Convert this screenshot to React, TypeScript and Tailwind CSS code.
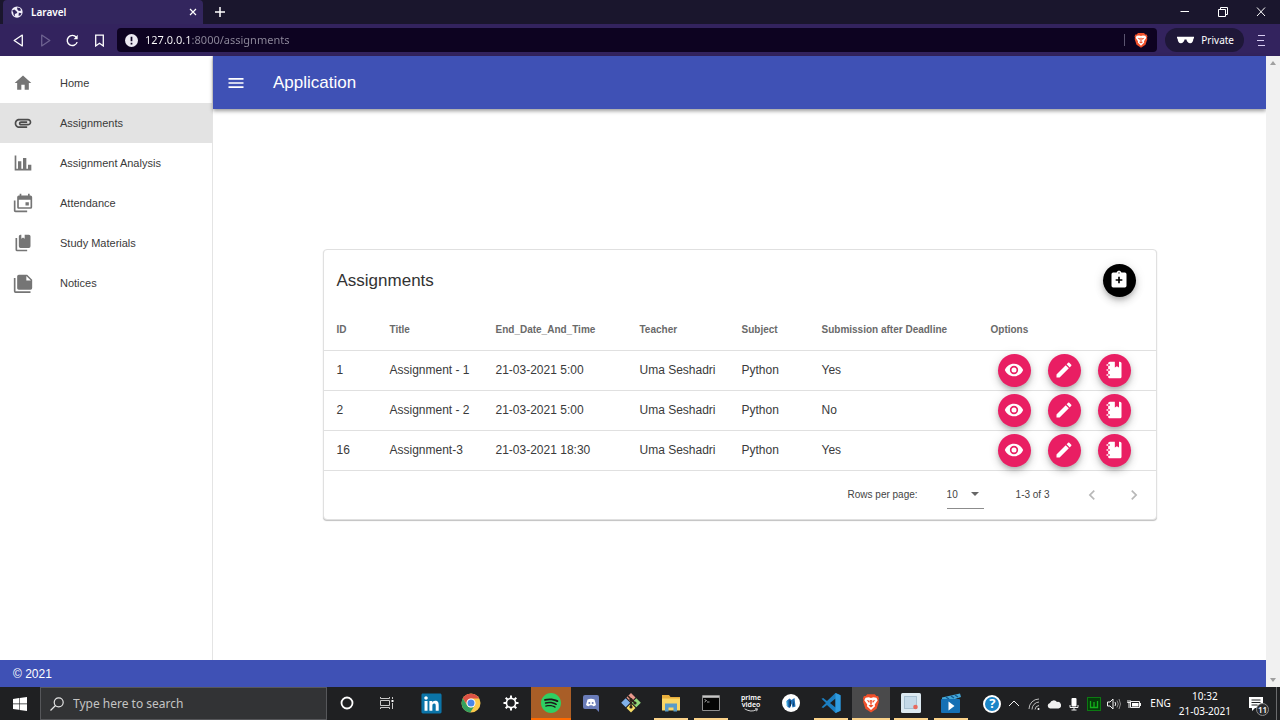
import type { ReactNode } from "react";
import { FaLinkedin } from "react-icons/fa";
import { SiSpotify } from "react-icons/si";

const iconPaths = {
  home: "M10 20v-6h4v6h5v-8h3L12 3 2 12h3v8z",
  attachment:
    "M2 12.5C2 9.46 4.46 7 7.5 7H18c2.21 0 4 1.79 4 4s-1.79 4-4 4H9.5C8.12 15 7 13.88 7 12.5S8.12 10 9.5 10H17v2H9.41c-.55 0-.55 1 0 1H18c1.1 0 2-.9 2-2s-.9-2-2-2H7.5C5.57 9 4 10.57 4 12.5S5.57 16 7.5 16H17v2H7.5C4.46 18 2 15.54 2 12.5z",
  chart: "M22,21H2V3H4V19H6V10H10V19H12V6H16V19H18V14H22V21Z",
  calendar:
    "M21,17V8H7V17H21M21,3A2,2 0 0,1 23,5V17A2,2 0 0,1 21,19H7C5.89,19 5,18.1 5,17V5A2,2 0 0,1 7,3H8V1H10V3H18V1H20V3H21M3,21H17V23H3C1.89,23 1,22.1 1,21V9H3V21M19,15H15V11H19V15Z",
  books:
    "M19,18H9A2,2 0 0,1 7,16V4A2,2 0 0,1 9,2H10V7L12,5.5L14,7V2H19A2,2 0 0,1 21,4V16A2,2 0 0,1 19,18M17,20V22H5A2,2 0 0,1 3,20V6H5V20H17Z",
  notes:
    "M16,9H21.5L16,3.5V9M7,2H17L23,8V18A2,2 0 0,1 21,20H7C5.89,20 5,19.1 5,18V4A2,2 0 0,1 7,2M3,6V22H21V24H3A2,2 0 0,1 1,22V6H3Z",
  menu: "M3,6H21V8H3V6M3,11H21V13H3V11M3,16H21V18H3V16Z",
  clipboardPlus:
    "M19,3H14.82C14.4,1.84 13.3,1 12,1C10.7,1 9.6,1.84 9.18,3H5A2,2 0 0,0 3,5V19A2,2 0 0,0 5,21H19A2,2 0 0,0 21,19V5A2,2 0 0,0 19,3M12,2.75A.75,.75 0 0,1 12.75,3.5A.75,.75 0 0,1 12,4.25A.75,.75 0 0,1 11.25,3.5A.75,.75 0 0,1 12,2.75M16,13H13V16H11V13H8V11H11V8H13V11H16V13Z",
  eye: "M12,9A3,3 0 0,0 9,12A3,3 0 0,0 12,15A3,3 0 0,0 15,12A3,3 0 0,0 12,9M12,17A5,5 0 0,1 7,12A5,5 0 0,1 12,7A5,5 0 0,1 17,12A5,5 0 0,1 12,17M12,4.5C7,4.5 2.73,7.61 1,12C2.73,16.39 7,19.5 12,19.5C17,19.5 21.27,16.39 23,12C21.27,7.61 17,4.5 12,4.5Z",
  pencil:
    "M20.71,7.04C21.1,6.65 21.1,6 20.71,5.63L18.37,3.29C18,2.9 17.35,2.9 16.96,3.29L15.12,5.12L18.87,8.87M3,17.25V21H6.75L17.81,9.93L14.06,6.18L3,17.25Z",
  notebook:
    "M3,7V5H5V4C5,2.89 5.9,2 7,2H13V9L15.5,7.5L18,9V2H19C20.05,2 21,2.95 21,4V20C21,21.05 20.05,22 19,22H7C5.95,22 5,21.05 5,20V19H3V17H5V13H3V11H5V7H3M7,11H5V13H7V11M7,7V5H5V7H7M7,19V17H5V19H7Z",
  left: "M15.41,16.58L10.83,12L15.41,7.41L14,6L8,12L14,18L15.41,16.58Z",
  right: "M8.59,16.58L13.17,12L8.59,7.41L10,6L16,12L10,18L8.59,16.58Z",
};

type IconName = keyof typeof iconPaths;

function Icon({ name, className = "size-5" }: { name: IconName; className?: string }) {
  return (
    <svg viewBox="0 0 24 24" fill="currentColor" aria-hidden="true" className={className}>
      <path d={iconPaths[name]} />
    </svg>
  );
}

function BraveLion({ className }: { className: string }) {
  return (
    <svg viewBox="0 0 24 24" aria-hidden="true" className={className}>
      <path d="M7.500 1.500h9l2 2.200 2 0 1.200 3-.7 1.800.5 2-2.800 8.500-6.700 4.500L5.300 19 2.500 10.500l.5-2L2.300 6.700l1.200-3 2 0z" fill="#f1502b" />
      <path d="M5.500 5.800l3.700-.6 2.800.8 2.800-.8 3.700.6 1.500 3-3.500 5 .3 2L12 20.500 7.200 15.800l.3-2L4 8.800z" fill="#fff" />
      <path d="M6.800 8.500l3.700.8-.7 2.700zM17.200 8.500l-3.700.8.7 2.700zM10.900 8.500h2.200l-.3 5h-1.600zM9 15l3-1.300 3 1.300-3 2.300z" fill="#f1502b" />
    </svg>
  );
}

function TitleBar() {
  return (
    <div className="flex h-6 items-stretch bg-[#1a162d] pl-[3px]">
      <div className="flex w-[200px] items-center rounded-t bg-[#33265e] pl-2 pr-1 text-white">
        <svg viewBox="0 0 16 16" className="size-3" aria-hidden="true">
          <circle cx="8" cy="8" r="7.500" fill="#f2effa" />
          <path d="M1.500 6l3-1.500L7 6.500l1.500 2-1.500 1.500-2 .5.500 3L3.500 12 3 9zM8 2l4 .5 1.500 3.500-3 .5L8.500 4.500zM10.500 9l3.500.5-1.500 3-2.500.5z" fill="#33265e" />
        </svg>
        <span className="ml-2 flex-1 text-[10px] font-semibold">Laravel</span>
        <button aria-label="Close tab" className="flex size-3 items-center justify-center">
          <svg viewBox="0 0 8 8" className="size-2" stroke="currentColor" strokeWidth="1.200" aria-hidden="true">
            <path d="M1 1l6 6M7 1L1 7" />
          </svg>
        </button>
      </div>
      <button aria-label="New tab" className="ml-3 text-white">
        <svg viewBox="0 0 10 10" className="size-[10px]" stroke="currentColor" strokeWidth="1.500" aria-hidden="true">
          <path d="M5 0v10M0 5h10" />
        </svg>
      </button>
      <div className="ml-auto flex items-center gap-7 pr-[14px] text-white">
        <button aria-label="Minimize">
          <svg viewBox="0 0 10 10" className="size-[10px]" stroke="currentColor" aria-hidden="true">
            <path d="M.5 4.500h8.500" />
          </svg>
        </button>
        <button aria-label="Restore">
          <svg viewBox="0 0 10 10" className="size-[10px]" stroke="currentColor" fill="none" aria-hidden="true">
            <path d="M.5 2.500h7v7h-7zM2.500 2.500v-2h7v7h-2" />
          </svg>
        </button>
        <button aria-label="Close">
          <svg viewBox="0 0 10 10" className="size-[10px]" stroke="currentColor" aria-hidden="true">
            <path d="M1 .5l8 8.500M9 .5L1 9" />
          </svg>
        </button>
      </div>
    </div>
  );
}

function AddressBar() {
  return (
    <div className="flex h-8 items-center bg-[#33235e] text-white">
      <div className="flex w-[117px] items-center gap-[14px] pl-3">
        <button aria-label="Back">
          <svg viewBox="0 0 12 12" className="size-[13px]" fill="none" stroke="currentColor" strokeWidth="1.200" strokeLinejoin="round" aria-hidden="true">
            <path d="M9.500 1v10L2 6z" />
          </svg>
        </button>
        <button aria-label="Forward" disabled className="text-[#6d6290]">
          <svg viewBox="0 0 12 12" className="size-[13px]" fill="none" stroke="currentColor" strokeWidth="1.200" strokeLinejoin="round" aria-hidden="true">
            <path d="M2.500 1v10L10 6z" />
          </svg>
        </button>
        <button aria-label="Reload">
          <svg viewBox="0 0 12 12" className="size-[13px]" fill="none" stroke="currentColor" strokeWidth="1.300" aria-hidden="true">
            <path d="M10.300 7.500A4.700 4.700 0 1 1 9.500 3" />
            <path d="M10.800.8v4H7z" fill="currentColor" stroke="none" />
          </svg>
        </button>
        <button aria-label="Bookmark">
          <svg viewBox="0 0 12 12" className="size-[13px]" fill="none" stroke="currentColor" strokeWidth="1.200" aria-hidden="true">
            <path d="M2.500 1h7v10L6 8.500 2.500 11z" />
          </svg>
        </button>
      </div>
      <div className="flex h-6 flex-1 items-center rounded bg-[#0d0321] px-2">
        <svg viewBox="0 0 12 12" className="size-[13px] shrink-0" aria-hidden="true">
          <circle cx="6" cy="6" r="6" fill="#eceaf2" />
          <path d="M5.200 2.500h1.600v4.300H5.200zM5.200 8h1.600v1.600H5.200z" fill="#0d0321" />
        </svg>
        <input
          aria-label="Address"
          defaultValue="127.0.0.1:8000/assignments"
          className="ml-[7px] h-6 min-w-0 flex-1 bg-[linear-gradient(90deg,#fff_46px,#8f8a9c_46px)] bg-clip-text pb-[2px] text-[11px] text-transparent outline-none"
        />
        <span className="h-3 w-px bg-[#5b5470]" />
        <button aria-label="Shields" className="ml-2">
          <BraveLion className="size-4" />
        </button>
      </div>
      <button className="ml-2 flex h-6 items-center gap-[7px] rounded-full bg-[#1e1738] pl-3 pr-[10px] text-[10px]">
        <svg viewBox="0 0 18 8" className="h-2 w-[17px]" fill="#fff" aria-hidden="true">
          <path d="M0 .5h18v2h-.6C17.200 5.800 16 7.500 14 7.500c-2.200 0-3.600-2-4-4h-2C7.600 5.500 6.200 7.500 4 7.500 2 7.500.8 5.800.6 2.500H0z" />
        </svg>
        Private
      </button>
      <button aria-label="Browser menu" className="ml-[13px] mr-[15px] text-[#d8cdf2]">
        <svg viewBox="0 0 8 11" className="h-[11px] w-2" stroke="currentColor" aria-hidden="true">
          <path d="M1 .5h7M0 5.500h7M1 10.500h7" />
        </svg>
      </button>
    </div>
  );
}

const navItems: { label: string; icon: IconName; active?: boolean }[] = [
  { label: "Home", icon: "home" },
  { label: "Assignments", icon: "attachment", active: true },
  { label: "Assignment Analysis", icon: "chart" },
  { label: "Attendance", icon: "calendar" },
  { label: "Study Materials", icon: "books" },
  { label: "Notices", icon: "notes" },
];

function Sidebar() {
  return (
    <nav className="w-[213px] shrink-0 border-r border-[#e4e4e4] bg-white pt-[7px] text-[11px] text-[#3a3a3a]">
      {navItems.map((item) => (
        <a
          key={item.label}
          href="#"
          className={`flex h-10 items-center gap-[27px] pl-[13px] ${item.active ? "bg-[#e3e3e3]" : ""}`}
        >
          <span className={item.active ? "text-[#4c4c4c]" : "text-[#757575]"}>
            <Icon name={item.icon} />
          </span>
          {item.label}
        </a>
      ))}
    </nav>
  );
}

function Fab({ label, icon, dark }: { label: string; icon: IconName; dark?: boolean }) {
  return (
    <button
      aria-label={label}
      className={`flex size-[33px] shrink-0 items-center justify-center rounded-full text-white shadow-[0_3px_5px_-1px_rgba(0,0,0,.2),0_5px_8px_rgba(0,0,0,.12),0_1px_12px_rgba(0,0,0,.1)] ${dark ? "bg-black" : "bg-[#e91e63]"}`}
    >
      <Icon name={icon} />
    </button>
  );
}

const columns = [
  { label: "ID", width: "w-[53px]" },
  { label: "Title", width: "w-[106px]" },
  { label: "End_Date_And_Time", width: "w-36" },
  { label: "Teacher", width: "w-[102px]" },
  { label: "Subject", width: "w-20" },
  { label: "Submission after Deadline", width: "w-[169px]" },
  { label: "Options", width: "" },
];

const rows = [
  ["1", "Assignment - 1", "21-03-2021 5:00", "Uma Seshadri", "Python", "Yes"],
  ["2", "Assignment - 2", "21-03-2021 5:00", "Uma Seshadri", "Python", "No"],
  ["16", "Assignment-3", "21-03-2021 18:30", "Uma Seshadri", "Python", "Yes"],
];

function AssignmentsCard() {
  return (
    <section className="w-full max-w-[834px] rounded border border-[#e0e0e0] bg-white shadow-[0_1px_1px_rgba(0,0,0,.25)]">
      <header className="flex h-[60px] items-center justify-between pl-[13px] pr-5">
        <h1 className="text-[17px] text-[#333]">Assignments</h1>
        <Fab label="Add assignment" icon="clipboardPlus" dark />
      </header>
      <table className="w-full table-fixed border-collapse text-left text-[#3a3a3a]">
        <thead>
          <tr className="h-10 border-b border-[#e0e0e0] text-[10px] text-[#6a6a6a]">
            {columns.map((column) => (
              <th key={column.label} className={`whitespace-nowrap px-[13px] pb-[2px] pt-0 font-bold ${column.width}`}>
                {column.label}
              </th>
            ))}
          </tr>
        </thead>
        <tbody className="text-xs">
          {rows.map((row) => (
            <tr key={row[0]} className="h-10 border-b border-[#e0e0e0]">
              {row.map((cell, index) => (
                <td key={columns[index].label} className="whitespace-nowrap px-[13px] py-0">
                  {cell}
                </td>
              ))}
              <td className="px-[13px] py-0">
                <div className="flex gap-[17px] pl-[7px]">
                  <Fab label="View" icon="eye" />
                  <Fab label="Edit" icon="pencil" />
                  <Fab label="Submissions" icon="notebook" />
                </div>
              </td>
            </tr>
          ))}
        </tbody>
      </table>
      <footer className="flex h-12 items-center justify-end pr-3 text-[10px] text-[#444]">
        <label htmlFor="rows-per-page">Rows per page:</label>
        <div className="relative ml-[29px] border-b border-[#8c8c8c]">
          <select id="rows-per-page" defaultValue="10" className="h-7 w-[37px] appearance-none bg-transparent outline-none">
            <option>5</option>
            <option>10</option>
            <option>15</option>
          </select>
          <svg viewBox="0 0 8 4" className="pointer-events-none absolute right-[5px] top-3 h-1 w-2" fill="#666" aria-hidden="true">
            <path d="M0 0h8L4 4z" />
          </svg>
        </div>
        <span className="ml-8">1-3 of 3</span>
        <div className="ml-8 flex gap-[22px] text-[#b8b8b8]">
          <button aria-label="Previous page" disabled>
            <Icon name="left" />
          </button>
          <button aria-label="Next page" disabled>
            <Icon name="right" />
          </button>
        </div>
      </footer>
    </section>
  );
}

function Scrollbar() {
  return (
    <div className="flex w-[14px] shrink-0 flex-col items-center justify-between bg-[#f1f1f1] py-[5px]" aria-hidden="true">
      <svg viewBox="0 0 6 4" className="h-1 w-[6px]" fill="#a0a0a0">
        <path d="M0 4h6L3 0z" />
      </svg>
      <svg viewBox="0 0 6 4" className="h-1 w-[6px]" fill="#a0a0a0">
        <path d="M0 0h6L3 4z" />
      </svg>
    </div>
  );
}

type TaskbarApp = { label: string; art: ReactNode; tone?: string };

const systemButtons: TaskbarApp[] = [
  {
    label: "Cortana",
    art: (
      <svg viewBox="0 0 14 14" className="size-[14px]" fill="none" stroke="#fff" strokeWidth="1.800">
        <circle cx="7" cy="7" r="5.500" />
      </svg>
    ),
  },
  {
    label: "Task View",
    art: (
      <svg viewBox="0 0 14 14" className="size-[14px]" fill="none" stroke="#c8c8c8">
        <path d="M.5 4.500h9v5h-9zM.5 1v1.500h9V1M.5 13v-1.500h9V13M12.500 1v2M12.500 7v6" />
        <path d="M11.500 4h2v2h-2z" fill="#fff" stroke="none" />
      </svg>
    ),
  },
];

const taskbarApps: TaskbarApp[] = [
  {
    label: "LinkedIn",
    art: (
      <span className="flex size-4 items-center justify-center bg-white">
        <FaLinkedin className="size-[23px] shrink-0 text-[#0b74a8]" />
      </span>
    ),
  },
  {
    label: "Chrome",
    art: (
      <svg viewBox="0 0 20 20" className="size-5">
        <circle cx="10" cy="10" r="9.500" fill="#fbc94a" />
        <path d="M1.800 5.200A9.500 9.500 0 0 1 18.200 5.500H10a4.500 4.500 0 0 0-4.200 6z" fill="#dc5246" />
        <path d="M1.800 5.200A9.500 9.500 0 0 0 9.300 19.500l4.300-7A4.500 4.500 0 0 1 6 12.200z" fill="#34a05f" />
        <circle cx="10" cy="10" r="4.500" fill="#fff" />
        <circle cx="10" cy="10" r="3.500" fill="#4a86e8" />
      </svg>
    ),
  },
  {
    label: "Settings",
    art: (
      <svg viewBox="0 0 16 16" className="size-4" fill="none" stroke="#fff">
        <circle cx="8" cy="8" r="4.600" strokeWidth="1.700" />
        <path
          d="M8 .5v2.500M8 13v2.500M.5 8H3M13 8h2.500M2.700 2.700l1.800 1.800M11.500 11.500l1.800 1.800M13.300 2.700l-1.800 1.800M4.500 11.500l-1.800 1.800"
          strokeWidth="2"
        />
      </svg>
    ),
  },
  {
    label: "Spotify",
    tone: "bg-[#a95e27] border-[#ff6a00]",
    art: (
      <span className="flex size-[18px] items-center justify-center rounded-full bg-[#1a1a1a]">
        <SiSpotify className="size-5 shrink-0 text-[#2fcf62]" />
      </span>
    ),
  },
  {
    label: "Discord",
    art: (
      <svg viewBox="0 0 18 18" className="size-[18px]">
        <path d="M3 1h12a2 2 0 0 1 2 2v15l-3-3H3a2 2 0 0 1-2-2V3a2 2 0 0 1 2-2z" fill="#6a7cb8" />
        <path d="M5.500 5.500Q9 4 12.500 5.500L14 11q-1.500 1.300-3 1.300l-.6-1H7.600l-.6 1Q5.500 12.300 4 11z" fill="#fff" />
        <circle cx="7.300" cy="9" r="1" fill="#6a7cb8" />
        <circle cx="10.700" cy="9" r="1" fill="#6a7cb8" />
      </svg>
    ),
  },
  {
    label: "Git Bash",
    art: (
      <svg viewBox="0 0 20 20" className="size-5">
        <path d="M10 0l4.500 4.500L10 9 5.500 4.500z" fill="#e8988c" />
        <path d="M4.700 5.300l4.500 4.500-4.500 4.500L.2 9.800z" fill="#80b0e8" />
        <path d="M15.300 5.300l4.500 4.500-4.500 4.500-4.500-4.500z" fill="#93d97a" />
        <path d="M10 10.600l4.500 4.500L10 19.600l-4.500-4.500z" fill="#f8dc66" />
        <path d="M7 3l3 3v8M10 6l4 4" stroke="#2b2118" strokeWidth="1.500" fill="none" />
        <circle cx="10" cy="6.500" r="1.600" fill="#2b2118" />
        <circle cx="10" cy="14" r="1.600" fill="#2b2118" />
        <circle cx="14" cy="10" r="1.600" fill="#2b2118" />
      </svg>
    ),
  },
  {
    label: "File Explorer",
    tone: "mx-[3px] border-[#fbd38a]",
    art: (
      <svg viewBox="0 0 20 18" className="h-[18px] w-5">
        <path d="M1 1h7l1.500 2H19v4H1z" fill="#e8ae3c" />
        <path d="M1 4.500h18v12H1z" fill="#fbd765" />
        <path d="M4 9.500h12v8h-3.500v-4h-5v4H4z" fill="#5a9cc8" />
      </svg>
    ),
  },
  {
    label: "Command Prompt",
    tone: "mx-[3px] border-[#fbd38a]",
    art: (
      <svg viewBox="0 0 18 16" className="h-4 w-[18px]">
        <path d="M.5.5h17v15H.5z" fill="#050505" stroke="#8f8f8f" />
        <path d="M1 1h16v1.800H1z" fill="#c6c6c6" />
        <path d="M2.500 4.500l2 1L2.500 7M5 7h2.500" stroke="#ccc" strokeWidth=".8" fill="none" />
      </svg>
    ),
  },
  {
    label: "Prime Video",
    art: (
      <span className="flex flex-col items-center text-[7px] font-semibold leading-[7px] text-white">
        <span>prime</span>
        <span>video</span>
        <svg viewBox="0 0 18 5" className="h-1 w-[18px]" fill="none" stroke="#fff">
          <path d="M1 1q8 5 15 1M14 1l3 0-1 3" />
        </svg>
      </span>
    ),
  },
  {
    label: "Music Player",
    art: (
      <svg viewBox="0 0 18 18" className="size-[18px]">
        <circle cx="9" cy="9" r="9" fill="#fff" />
        <path d="M4.500 7l3-2.500 2 1.500 3-2 1 8.500-3 1-1-4-1.500 4.500-2.500-1z" fill="#1f6fb5" />
        <path d="M7.500 6l1.500 1v5l-1.500 1zM11 6.500l1 5h-1z" fill="#0c2f55" />
        <path d="M5 7v5" stroke="#51c2ec" />
      </svg>
    ),
  },
  {
    label: "Visual Studio Code",
    tone: "mx-[3px] border-[#fbd38a]",
    art: (
      <svg viewBox="0 0 20 20" className="size-5">
        <path d="M14.500 0L19.500 2.200v15.600L14.500 20 6 12 2.200 15 .5 14.200 5 10 .5 5.800 2.200 5 6 8zM14.500 5.500L9 10l5.500 4.500z" fill="#1c7fc2" />
        <path d="M14.500 0l5 2.200v15.600l-5 2.200z" fill="#2f9bdf" />
      </svg>
    ),
  },
  {
    label: "Brave",
    tone: "mx-px bg-[#4a4a4b] border-[#fbd38a]",
    art: <BraveLion className="size-5" />,
  },
  {
    label: "Snipping Tool",
    tone: "mx-[3px] border-[#fbd38a]",
    art: (
      <svg viewBox="0 0 20 20" className="size-5">
        <rect width="20" height="20" rx="1.500" fill="#dce9f1" />
        <path d="M3.500 3.500h12v12h-12z" fill="#c4d9e8" stroke="#7f9fb5" strokeDasharray="1 1" />
        <circle cx="14.500" cy="14" r="2.300" fill="#e8695e" />
      </svg>
    ),
  },
  {
    label: "Movies",
    tone: "mx-[3px] border-[#fbd38a]",
    art: (
      <svg viewBox="0 0 20 20" className="size-5">
        <path d="M1 4.500L19 .5l1 3.500-9 3H1z" fill="#43a7d8" />
        <path d="M5 4l3 2M10 3l3 2M14 2l3 2" stroke="#135a95" strokeWidth="1.500" />
        <rect y="6" width="19" height="14" rx="1" fill="#1570b4" />
        <path d="M7.500 8.500l6 4.500-6 4.500z" fill="#fff" />
      </svg>
    ),
  },
];

function TaskbarGroup({ apps }: { apps: TaskbarApp[] }) {
  return (
    <div className="flex">
      {apps.map((app) => (
        <div key={app.label} className="flex w-10">
          <button
            aria-label={app.label}
            className={`flex flex-1 items-center justify-center border-b-2 pt-px ${app.tone ?? "border-transparent"}`}
          >
            {app.art}
          </button>
        </div>
      ))}
    </div>
  );
}

function TrayIcon({ label, children }: { label: string; children: ReactNode }) {
  return (
    <button aria-label={label} className="flex w-5 items-center justify-center">
      <svg viewBox="0 0 14 14" className="size-[14px]" fill="none" stroke="#f2f2f2">
        {children}
      </svg>
    </button>
  );
}

function Taskbar() {
  return (
    <div className="flex h-[33px] items-stretch bg-[#1f2022] text-white">
      <button aria-label="Start" className="flex w-10 items-center justify-center">
        <svg viewBox="0 0 14 14" className="size-[14px]" fill="#fff" aria-hidden="true">
          <path d="M0 2l6-.9v5.500H0zM6.600 1L14 0v6.600H6.600zM0 7.300h6v5.500L0 12zM6.600 7.300H14V14l-7.400-1z" />
        </svg>
      </button>
      <label className="flex w-[287px] items-center gap-[9px] border border-[#56575a] bg-[#323335] pl-[9px]">
        <svg viewBox="0 0 14 14" className="size-[14px]" fill="none" stroke="#e4e4e4" strokeWidth="1.200" aria-hidden="true">
          <circle cx="8.700" cy="5.300" r="4.500" />
          <path d="M5.500 8.500L.5 13.500" />
        </svg>
        <input
          aria-label="Search"
          placeholder="Type here to search"
          className="min-w-0 flex-1 bg-transparent text-xs text-white outline-none placeholder:text-[#c4c4c4]"
        />
      </label>
      <div className="flex gap-1">
        <TaskbarGroup apps={systemButtons} />
        <TaskbarGroup apps={taskbarApps} />
      </div>
      <div className="ml-auto flex items-stretch">
        <button aria-label="Help" className="mr-[2px] flex w-5 items-center justify-center">
          <span className="flex size-[18px] items-center justify-center rounded-full border-2 border-white bg-[#1b86c8] text-[13px] font-bold leading-none">
            ?
          </span>
        </button>
        <TrayIcon label="Show hidden icons">
          <path d="M2 9l5-5 5 5" />
        </TrayIcon>
        <TrayIcon label="Network">
          <path d="M2 12A10 10 0 0 1 12 2M5 12.500A7.500 7.500 0 0 1 12 5M8 12.500A4.500 4.500 0 0 1 12 8.500" stroke="#bdbdbd" />
          <circle cx="11.500" cy="12" r="1" fill="#fff" stroke="none" />
        </TrayIcon>
        <TrayIcon label="OneDrive">
          <path d="M3 11.500a2.800 2.800 0 0 1 0-5.500 4 4 0 0 1 7-1 3.300 3.300 0 0 1 1.500 6.500z" fill="#f0f0f0" stroke="none" />
        </TrayIcon>
        <TrayIcon label="Microphone">
          <rect x="4.500" y="1" width="5" height="8.500" rx="1" fill="#fff" stroke="none" />
          <path d="M3 8v2.500h8V8M7 10.500V13M4.500 13h5" />
        </TrayIcon>
        <TrayIcon label="Antivirus">
          <rect x=".5" y=".5" width="13" height="13" fill="#063c0a" stroke="#0c7a12" />
          <path d="M3.500 4v6.500h7V4M7 5v5" stroke="#14b01c" strokeWidth="1.300" />
        </TrayIcon>
        <TrayIcon label="Volume">
          <path d="M.5 5h2.500l3-3v10L3 9H.5zM8 5q1.500 2 0 4" />
          <path d="M10 3.500q2.500 3.500 0 7M12 2q3 5 0 10" stroke="#8b8b8b" />
        </TrayIcon>
        <TrayIcon label="Battery">
          <path d="M3.500 4.500h9v6h-9zM13.500 6v3M1 3v3M3 3v3M.5 5.500h3M2 6v5" />
          <path d="M5 6h6.500v3.500H5z" fill="#fff" stroke="none" />
        </TrayIcon>
        <button className="ml-[6px] text-[10px]">ENG</button>
        <button className="ml-2 flex flex-col items-center justify-center text-[10px] leading-[15px]">
          <span>10:32</span>
          <span>21-03-2021</span>
        </button>
        <button aria-label="11 notifications" className="relative ml-[18px] mr-[7px] flex w-5 items-center">
          <svg viewBox="0 0 14 14" className="size-[14px]" aria-hidden="true">
            <path d="M0 0h14v11H6l-3 3v-3H0z" fill="#fff" />
            <path d="M2.500 3h9M2.500 5.500h9M2.500 8h6" stroke="#1f2022" />
          </svg>
          <span className="absolute bottom-1 right-0 flex size-[13px] items-center justify-center rounded-full border border-[#8b8b8b] bg-[#2b2c2e] text-[8px] font-semibold leading-none">
            11
          </span>
        </button>
        <span className="mr-[3px] w-px bg-[#6a6b6d]" />
      </div>
    </div>
  );
}

export default function App() {
  return (
    <div className="flex min-h-screen w-full flex-col bg-white font-['Noto_Sans',sans-serif]">
      <TitleBar />
      <AddressBar />
      <div className="flex flex-1 font-['Liberation_Sans',Arial,sans-serif]">
        <div className="flex min-w-0 flex-1 flex-col">
          <div className="flex flex-1">
            <Sidebar />
            <div className="flex min-w-0 flex-1 flex-col">
              <header className="flex h-[53px] items-center gap-[27px] bg-[#3f51b5] pl-[13px] text-white shadow-[0_2px_4px_rgba(0,0,0,.4)]">
                <button aria-label="Toggle menu">
                  <Icon name="menu" />
                </button>
                <span className="text-[17px]">Application</span>
              </header>
              <main className="flex flex-1 items-center justify-center">
                <AssignmentsCard />
              </main>
            </div>
          </div>
          <footer className="flex h-[27px] items-center bg-[#3f51b5] pl-[13px] text-xs text-white">© 2021</footer>
        </div>
        <Scrollbar />
      </div>
      <Taskbar />
    </div>
  );
}
